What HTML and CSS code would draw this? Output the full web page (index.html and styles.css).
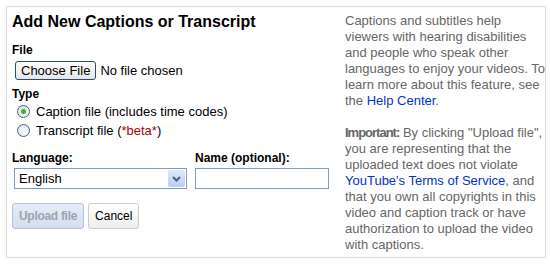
FILE: index.html
```html
<!DOCTYPE html>
<html lang="en">
<head>
    <meta charset="UTF-8"/>
    <title>Add New Captions or Transcript</title>
    <link rel="stylesheet" href="styles.css">
</head>
<body>

<div class="panel">
    <div class="form-col">
        <h2>Add New Captions or Transcript</h2>

        <div class="field-label">File</div>
        <div class="file-row">
            <button class="choose-btn">Choose File</button>
            <span>No file chosen</span>
        </div>

        <div class="field-label type-label">Type</div>
        <label class="radio-row">
            <input type="radio" name="type" checked/>
            <span>Caption file (includes time codes)</span>
        </label>
        <label class="radio-row">
            <input type="radio" name="type"/>
            <span>Transcript file (<span class="beta">*beta*</span>)</span>
        </label>

        <div class="lang-row">
            <div class="lang-col">
                <label class="field-label" for="language">Language:</label>
                <div class="select-wrap">
                    <select id="language">
                        <option>English</option>
                    </select>
                    <span class="select-arrow">
                        <svg width="17" height="17" viewBox="0 0 17 17">
                            <path d="M5 7 L8.5 10.5 L12 7" fill="none" stroke="#4d6185" stroke-width="2"/>
                        </svg>
                    </span>
                </div>
            </div>
            <div class="name-col">
                <label class="field-label" for="name">Name (optional):</label>
                <input type="text" id="name"/>
            </div>
        </div>

        <div class="btn-group">
            <button class="upload-btn" disabled>Upload file</button>
            <button class="cancel-btn">Cancel</button>
        </div>
    </div>

    <div class="help-col">
        <p>Captions and subtitles help viewers with hearing disabilities and people who speak other languages to enjoy your videos. To learn more about this feature, see the <a href="#">Help Center</a>.</p>
        <p><strong>Important:</strong> By clicking "Upload file", you are representing that the uploaded text does not violate <a href="#">YouTube's Terms of Service</a>, and that you own all copyrights in this video and caption track or have authorization to upload the video with captions.</p>
    </div>
</div>

</body>
</html>
```

FILE: styles.css
```css
* {
    margin: 0;
    padding: 0;
    box-sizing: border-box;
}

body {
    padding: 6px;
    font-family: "Liberation Sans", Arial, sans-serif;
    font-size: 13px;
    color: #000;
    background-color: #fff;
}

.panel {
    display: flex;
    width: 540px;
    height: 252px;
    border: 1px solid #dcdcdc;
}

.form-col {
    flex: 0 0 333px;
    padding-left: 5px;
}

h2 {
    margin-top: 5px;
    font-size: 16px;
    line-height: 19px;
    font-weight: bold;
}

.field-label {
    display: block;
    margin-top: 12px;
    font-size: 12px;
    line-height: 15px;
    font-weight: bold;
}

.file-row {
    display: flex;
    align-items: center;
    gap: 4px;
    margin-top: 3px;
    margin-left: 3px;
    line-height: 19px;
}

.choose-btn {
    height: 19px;
    padding: 0 5px;
    font-family: inherit;
    font-size: 13px;
    color: #000;
    border: 1px solid #2a4a73;
    border-radius: 3px;
    background: linear-gradient(#ffffff, #e6e6e6);
}

.type-label {
    margin-top: 7px;
}

.radio-row {
    display: flex;
    align-items: center;
    height: 19px;
    margin-left: 5px;
}

.radio-row input {
    appearance: none;
    width: 13px;
    height: 13px;
    margin-right: 6px;
    border: 1px solid #41618a;
    border-radius: 50%;
    background: radial-gradient(circle at 60% 60%, #ffffff, #d9dde6);
    position: relative;
}

.radio-row input:checked::after {
    content: "";
    position: absolute;
    left: 3px;
    top: 3px;
    width: 5px;
    height: 5px;
    border-radius: 50%;
    background: #31b431;
}

.beta {
    color: #aa0000;
}

.lang-row {
    display: flex;
    gap: 8px;
    margin-top: 11px;
}

.lang-row .field-label {
    margin-top: 0;
    margin-bottom: 2px;
}

.lang-col {
    width: 175px;
}

.select-wrap {
    position: relative;
    margin-left: 2px;
    width: 173px;
    height: 21px;
}

select {
    appearance: none;
    width: 173px;
    height: 21px;
    padding-left: 4px;
    font-family: inherit;
    font-size: 13px;
    color: #000;
    border: 1px solid #7f9db9;
    border-radius: 0;
    background-color: #fff;
}

.select-arrow {
    position: absolute;
    right: 2px;
    top: 2px;
    width: 17px;
    height: 17px;
    border-radius: 2px;
    background: linear-gradient(#dfe8fb, #b9cdf3);
    line-height: 0;
}

input[type="text"] {
    width: 134px;
    height: 21px;
    border: 1px solid #7f9db9;
    font-family: inherit;
    font-size: 13px;
}

.btn-group {
    display: flex;
    gap: 4px;
    margin-top: 14px;
}

.upload-btn,
.cancel-btn {
    height: 26px;
    padding: 0 6px;
    font-family: inherit;
    font-size: 12px;
    border-radius: 3px;
}

.upload-btn {
    font-weight: bold;
    letter-spacing: -0.3px;
    color: #9ea4ad;
    border: 1px solid #b2c4de;
    background: linear-gradient(#e6edf7, #d2def0);
}

.cancel-btn {
    color: #000;
    border: 1px solid #cccccc;
    background: linear-gradient(#ffffff, #eeeeee);
}

.help-col {
    width: 200px;
    padding-top: 6px;
    padding-left: 5px;
    box-sizing: content-box;
    color: #666;
    line-height: 16px;
}

.help-col p + p {
    margin-top: 16px;
}

.help-col a {
    color: #0033cc;
    text-decoration: none;
}

.help-col strong {
    color: #666;
    letter-spacing: -1px;
}
```
